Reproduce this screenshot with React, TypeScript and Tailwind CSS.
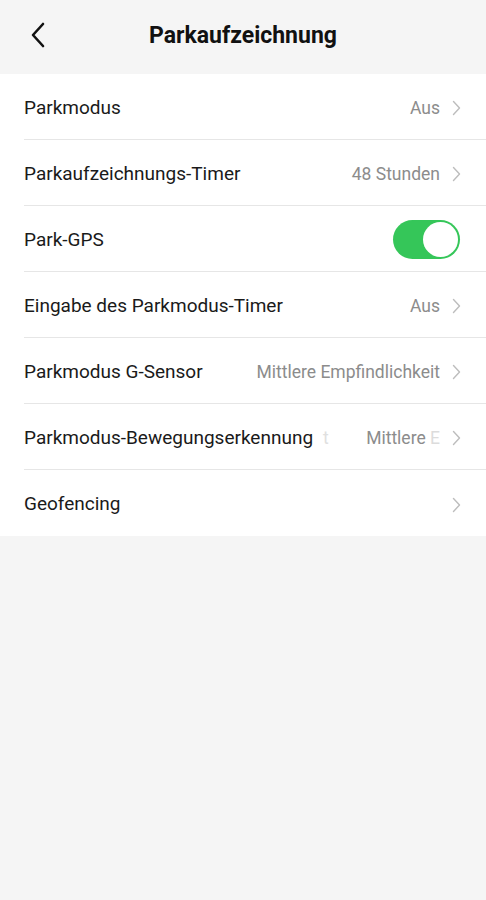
import React from 'react';

const Chevron = () => (
    <svg width="9" height="16" viewBox="0 0 9 16" fill="none" className="shrink-0">
        <path d="M1.5 1.5L7.5 8L1.5 14.5" stroke="#bdbdbd" strokeWidth="1.4" strokeLinecap="round" strokeLinejoin="round" />
    </svg>
);

const Row = ({ label, value, last }: { label: string; value?: React.ReactNode; last?: boolean }) => (
    <div className="h-[66px] pl-6 flex">
        <div className={`flex-1 flex items-center pt-[3px] pr-[25px] ${last ? '' : 'border-b border-[#e6e6e6]'}`}>
            <span className="text-[19px] text-[#1a1a1a] whitespace-nowrap">{label}</span>
            <div className="flex-1 flex items-center justify-end gap-[12px] min-w-0">
                {value && <span className="text-[17.5px] text-[#8c8c8c] whitespace-nowrap">{value}</span>}
                <Chevron />
            </div>
        </div>
    </div>
);

const App = () => {
    return (
        <div className="min-h-[900px] bg-[#f5f5f5] font-['Roboto',sans-serif]">
            <div className="h-[74px] flex items-center relative">
                <button className="absolute left-[28px] top-[22px]">
                    <svg width="22" height="26" viewBox="0 0 22 26" fill="none">
                        <path d="M15 2L5 13L15 24" stroke="#111" strokeWidth="2.6" strokeLinecap="round" strokeLinejoin="round" />
                    </svg>
                </button>
                <h1 className="w-full text-center text-[23px] font-bold text-[#111] -mt-[2px]">Parkaufzeichnung</h1>
            </div>

            <div className="bg-white">
                <Row label="Parkmodus" value="Aus" />
                <Row label="Parkaufzeichnungs-Timer" value="48 Stunden" />
                <div className="h-[66px] pl-6 flex">
                    <div className="flex-1 flex items-center justify-between pt-[1px] pr-[26px] border-b border-[#e6e6e6]">
                        <span className="text-[19px] text-[#1a1a1a] pt-[2px]">Park-GPS</span>
                        <div className="w-[67px] h-[39px] rounded-full bg-[#35c659] p-[2px] flex justify-end">
                            <div className="w-[35px] h-[35px] rounded-full bg-white" />
                        </div>
                    </div>
                </div>
                <Row label="Eingabe des Parkmodus-Timer" value="Aus" />
                <Row label="Parkmodus G-Sensor" value="Mittlere Empfindlichkeit" />
                <div className="h-[66px] pl-6 flex">
                    <div className="flex-1 flex items-center pt-[3px] pr-[25px] border-b border-[#e6e6e6]">
                        <span className="text-[19px] text-[#1a1a1a] whitespace-nowrap">Parkmodus-Bewegungserkennung</span>
                        <span className="ml-[10px] text-[17.5px] text-[#e0e0e0]">t</span>
                        <div className="flex-1 flex items-center justify-end gap-[12px] min-w-0">
                            <span className="text-[17.5px] text-[#8c8c8c] whitespace-nowrap">
                                Mittlere <span className="text-[#dcdcdc]">E</span>
                            </span>
                            <Chevron />
                        </div>
                    </div>
                </div>
                <Row label="Geofencing" last />
            </div>
        </div>
    );
};

export default App;
